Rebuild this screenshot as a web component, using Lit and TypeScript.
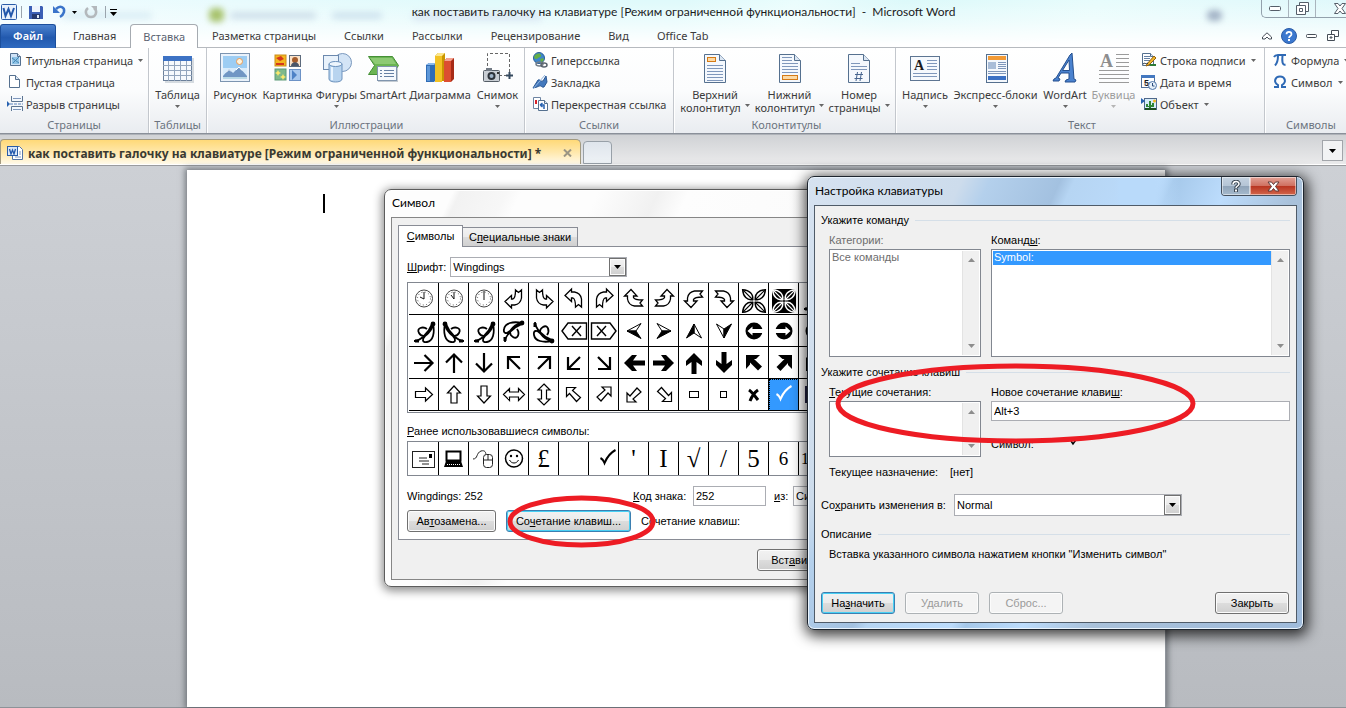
import { LitElement, html, svg, css, nothing } from "lit";
import { customElement } from "lit/decorators.js";

const RIBBON_FONT = css`"Noto Sans", "Open Sans", sans-serif`;
const TITLE_FONT = css`Lato, "Noto Sans", sans-serif`;
const DIALOG_FONT = css`"Liberation Sans", Arial, sans-serif`;

/* ---------- shared glyph helpers ---------- */

const triangle = html`<svg class="tri" width="5" height="3" viewBox="0 0 5 3" aria-hidden="true"><path d="M0 0h5L2.500 3z" fill="currentColor"/></svg>`;
const dropTriangle = html`<svg width="7" height="4" viewBox="0 0 7 4" aria-hidden="true"><path d="M0 0h7L3.500 4z" fill="#000"/></svg>`;

const icon = (size: number, body: unknown) =>
  html`<svg width=${size} height=${size} viewBox="0 0 ${size} ${size}" aria-hidden="true">${body}</svg>`;

const pageShape = (x: number, y: number, w: number, h: number, fold: number, fill = "#fff") => svg`
  <path d="M${x} ${y}h${w - fold}l${fold} ${fold}v${h - fold}h${-w}z" fill=${fill} stroke="#55708f"/>
  <path d="M${x + w - fold} ${y}v${fold}h${fold}" fill="#dbe6f3" stroke="#55708f"/>`;

const lines = (x: number, w: number, ys: number[], color = "#7f97bb") =>
  ys.map((y) => svg`<rect x=${x} y=${y} width=${w} height="1" fill=${color}/>`);

const bigIcons: Record<string, unknown> = {
  table: icon(32, svg`
    <rect x="3" y="6" width="29" height="25" fill="#9aa7b5" opacity=".4"/>
    <rect x="1.500" y="4.500" width="28" height="24" fill="#f6f9fd" stroke="#6b7f99"/>
    <rect x="1" y="4" width="29" height="5" fill="#3d72c4"/>
    <path d="M1 13.500h29M1 18.500h29M1 23.500h29M6.500 9v20M12.500 9v20M18.500 9v20M24.500 9v20" stroke="#93a5bd" fill="none"/>`),
  picture: icon(32, svg`
    <rect x="1.500" y="1.500" width="29" height="28" fill="#eaf2fb" stroke="#7c94b0"/>
    <rect x="4" y="4" width="24" height="23" fill="#9dcdf3"/>
    <rect x="4" y="16" width="24" height="11" fill="#d7ebfb"/>
    <circle cx="20.500" cy="9.500" r="3" fill="#fff4dc" stroke="#eb9a54"/>
    <path d="M4 24l6-7 4 4 6-6 8 9v1H4z" fill="#7096c4"/><path d="M7 20.500l3-3 2 2M17 18l3-3 3 3.500" stroke="#fff" fill="none"/>
    <path d="M4 25h24v2H4z" fill="#b9d9e6"/>`),
  clipart: icon(32, svg`
    <rect x="3" y="3" width="11" height="11" fill="#f4b71f" stroke="#c98c1a"/><path d="M4 6l5-2 3 3-4 2zM4 11h8v2H4z" fill="#d4381c"/>
    <rect x="17.500" y="3.500" width="11" height="11" fill="#fbe3c9" stroke="#5c6a7c"/><circle cx="23" cy="8" r="3" fill="#a55c2b"/><path d="M19 14c0-5 8-5 8 0z" fill="#4a5568"/>
    <rect x="3" y="17" width="11" height="11" fill="#7fb98b" stroke="#5d9a78"/><path d="M6 18l1 2 2 1-2 1-1 2-1-2-2-1 2-1zM11 22l1 2 2 1-2 1-1 2-1-2-2-1 2-1z" fill="#fbe86b"/>
    <rect x="17.500" y="17.500" width="11" height="11" fill="#a9c8ee" stroke="#6c92c6"/><path d="M20 18l5 5-5 5z" fill="#4f82c6"/>`),
  shapes: icon(32, svg`
    <circle cx="21.500" cy="10.500" r="9" fill="#d3e4f6" stroke="#7a98bd"/>
    <rect x="2.500" y="3.500" width="15" height="14" fill="#e9f2fb" stroke="#6c89ae"/>
    <path d="M8 12v15c0 4 13 4 13 0V12z" fill="#b8d4ef" stroke="#6c92bd"/>
    <ellipse cx="14.500" cy="12" rx="6.500" ry="2.500" fill="#eef6fd" stroke="#6c92bd"/>
    <path d="M11 15v13" stroke="#eaf5ff" stroke-width="2"/>`),
  smartart: icon(32, svg`
    <path d="M1.500 4.500h24l6 9-6 9h-24l6-9z" fill="#6bb453" stroke="#459036"/>
    <path d="M3 6h22l4 6H8z" fill="#9bd383" opacity=".7"/>
    <rect x="11" y="15" width="20" height="15" fill="#8c99a8" opacity=".5"/>
    <rect x="10.500" y="14.500" width="19" height="14" fill="#f5f9fd" stroke="#8095ae"/>
    ${lines(17, 10, [18, 21, 24], "#6580a4")}${lines(13, 2, [18, 21, 24], "#6580a4")}`),
  chart: icon(32, svg`
    <path d="M2 13l3-2h7v17l-2 2H2z" fill="#2f6cb5"/><path d="M2 13l3-2h7l-2 2z" fill="#8bb9ea"/><path d="M3 14h3v15H3z" fill="#5d97d8"/>
    <path d="M11 4l3-3h7v28h-10z" fill="#c99500"/><path d="M11 4h7v26h-7z" fill="#f2c224"/><path d="M11 4l3-3h7l-3 3z" fill="#fbe68c"/>
    <path d="M20 9l3-3h7v21l-3 3h-7z" fill="#a72b17"/><path d="M20 9h7v21h-7z" fill="#dc4d31"/><path d="M20 9l3-3h7l-3 3z" fill="#f4a391"/>`),
  screenshot: icon(32, svg`
    <path d="M5.500 14V1.500h22V21M17 23.500h8" fill="none" stroke="#666" stroke-dasharray="3 2"/>
    <path d="M27.500 20v7M24 23.500h7" stroke="#34495e" stroke-width="2"/>
    <rect x="1.500" y="18.500" width="16" height="11" rx="1" fill="#c9ced4" stroke="#555d66"/><path d="M4 16h6v3H4z" fill="#727a84"/>
    <circle cx="9.500" cy="24" r="4" fill="#2d333a"/><circle cx="9.500" cy="24" r="2" fill="#9fb4c8"/><rect x="15" y="20" width="2" height="2" fill="#333"/>`),
  header: icon(32, svg`${pageShape(5.5, 2.5, 21, 28, 6, "#f4f8fd")}<rect x="8.500" y="5.500" width="8" height="4" fill="#fcd9a4" stroke="#d57a15"/>${lines(8, 16, [13, 16, 19, 22, 25, 28])}`),
  footer: icon(32, svg`${pageShape(5.5, 2.5, 21, 28, 6, "#f4f8fd")}${lines(8, 10, [5, 8])}${lines(8, 16, [11, 14, 17, 20])}<rect x="8.500" y="23.500" width="15" height="4" fill="#fcd9a4" stroke="#d57a15"/>`),
  number: icon(32, svg`${pageShape(5.5, 2.5, 21, 28, 6, "#f4f8fd")}${lines(8, 9, [11])}${lines(8, 16, [14, 17])}<path d="M14.500 20l-1.500 9M18.500 20l-1.500 9M12 22.500h8M11.500 26.500h8" stroke="#47658f" fill="none"/>`),
  textbox: icon(32, svg`
    <rect x="1.500" y="4.500" width="29" height="24" fill="#f6f9fd" stroke="#5d7592"/>${lines(18, 10, [8, 11, 14, 17])}${lines(4, 24, [21, 24])}
    <text x="5" y="18" font-family="Liberation Serif, serif" font-weight="700" font-size="14" fill="#1c1c1c">A</text>`),
  blocks: icon(32, svg`
    <rect x="6.500" y="2.500" width="21" height="28" fill="#f4f8fd" stroke="#55708f"/><rect x="8" y="4" width="18" height="4" fill="#f29a35"/>
    <rect x="8" y="10" width="8" height="7" fill="#a9bdd8"/>${lines(18, 8, [10, 12, 14, 16])}${lines(8, 18, [19, 21])}<rect x="8" y="24" width="18" height="4" fill="#3a70c4"/>`),
  wordart: icon(32, svg`
    <path d="M22 1l2 26 2 1-1 2H15l1-2 3-1v-6h-8l-3 5 2 1-1 2H3l1-2 2-1L20 3z" transform="translate(1 0)" fill="#4a82cf" stroke="#244f8e"/>
    <path d="M13.500 18.500h7L20 8z" fill="#fff" stroke="#244f8e"/>`),
  dropcap: icon(32, svg`
    ${lines(18, 13, [2, 6, 10, 14], "#9b9b9b")}${lines(1, 30, [18, 22, 26, 30], "#9b9b9b")}
    <text x="2" y="15" font-family="Liberation Serif, serif" font-weight="700" font-size="18" fill="#8d8d8d">A</text>`),
};

const smallIcons: Record<string, unknown> = {
  cover: icon(16, svg`${pageShape(3.5, 1.5, 10, 12, 3, "#cfe3f7")}<rect x="5" y="5" width="7" height="7" fill="#8fc3e6"/><path d="M5 6l7 5M12 5l-6 6" stroke="#4587b5"/>`),
  blank: icon(16, svg`${pageShape(2.5, 1.5, 10, 12, 4)}`),
  breakPage: icon(16, svg`
    <path d="M4.500 0v5.500h11V0M4.500 15v-4.500h11V15" fill="#f4f8fd" stroke="#5d7592"/>${lines(6, 8, [2, 13])}<path d="M3 8h13" stroke="#5a83bd" stroke-dasharray="3 1"/><path d="M0 5l3 3-3 3z" fill="#2862b0"/>`),
  link: icon(16, svg`
    <circle cx="7" cy="6" r="5.500" fill="#3d86cc" stroke="#2a5f97"/><path d="M3 3c3-2 5-2 6 0s-2 2-3 3-3 2-4-1zM8 7l3-1 1 2-3 3z" fill="#64ae46"/>
    <ellipse cx="7.500" cy="12" rx="3.500" ry="2" fill="none" stroke="#737d88" stroke-width="1.500"/><ellipse cx="12" cy="13" rx="3" ry="2" fill="none" stroke="#59636e" stroke-width="1.500"/>`),
  bookmark: icon(16, svg`<path d="M1 14l5-8c2-1 3 2 5 1l3-5 1 6-3 5c-2 1-3-2-5-1l-2 1z" fill="#4278bd" stroke="#2b5893"/><path d="M1 15L13 1" stroke="#8fb3df"/>`),
  crossref: icon(16, svg`
    <path d="M1.500 1.500h7v11h-7z" fill="#fff" stroke="#6d84a2"/><rect x="3" y="4" width="2" height="4" fill="#d8232a"/>
    ${pageShape(6.5, 4.5, 9, 10, 3)}<path d="M12 13V9H8m0 0l2.500-2M8 9l2.500 2" stroke="#2862b0" stroke-width="1.500" fill="none"/>`),
  signature: icon(16, svg`
    ${pageShape(1.5, 1.5, 11, 12, 3)}${lines(3, 6, [4, 6, 8], "#6580a4")}<path d="M6 12l7-8 2 2-7 7-3 1z" fill="#f0b62e" stroke="#946311"/><path d="M9 13h6" stroke="#2d7b36" stroke-width="2"/><path d="M2 12c2-2 3 1 5-1" stroke="#1b2a3a" fill="none"/>`),
  date: icon(16, svg`
    <rect x=".5" y="1.500" width="13" height="12" fill="#fff" stroke="#53709a"/><rect x="0" y="1" width="14" height="3" fill="#4378c0"/>
    <text x="3" y="12" font-family="Liberation Sans, sans-serif" font-weight="700" font-size="9" fill="#15191f">5</text><circle cx="11.500" cy="11.500" r="4" fill="#e6f0fa" stroke="#5176a8"/><path d="M11.500 9v3h2" stroke="#284b7c" fill="none"/>`),
  object: icon(16, svg`
    <rect x="3.500" y="2.500" width="12" height="11" fill="#d6ecfa" stroke="#4e678a"/><path d="M5 8h2v2h1V5h2v4h1V7h2v4h-3v2H8v-2H5z" fill="#2e8535"/><circle cx="13.500" cy="5" r="1.500" fill="#f2b41d"/>
    <path d="M0 2l4 3-4 3z" fill="#2862b0"/><path d="M4 13h11" stroke="#1d4f22" stroke-width="2"/>`),
  pi: icon(16, svg`<path d="M2 5c1-2 2-2 4-2h8M6 3.500c0 4-1 8-3 10M10.500 3.500c-.5 5-.5 10 3 9" stroke="#2e69b5" stroke-width="2" fill="none"/>`),
  omega: icon(16, svg`<path d="M2 13h4v-2C1 8 3 2.500 8 2.500S15 8 10 11v2h4" stroke="#2e69b5" stroke-width="2" fill="none"/>`),
};

/* ---------- symbol table glyphs, drawn in a 30 x 31 cell ---------- */

const clock = (hands: string) => svg`
  <circle cx="15" cy="15.500" r="8.500" fill="#fff" stroke="#444"/>
  <circle cx="15" cy="15.500" r="6.500" fill="none" stroke="#555" stroke-dasharray="1 2.400"/>
  <path d=${hands} stroke="#111" fill="none"/>`;
const ribbonArrow = (matrix: string) => svg`
  <path transform="matrix(${matrix} 15 15.500)" d="M-9 3l6.500-6v3.500h1.500q2.500-1 2.500-9l3 2.500 3-2.500v8q-1 6-7 7h-3v3z" fill="#fff" stroke="#000" stroke-width="1.300"/>`;
const thin = (angle: number) => svg`
  <g transform="rotate(${angle} 15 16)"><path d="M5 16h18M15.500 8l8 8-8 8" stroke="#000" stroke-width="2.200" fill="none"/></g>`;
const thinDiagonal = (angle: number) => svg`
  <g transform="rotate(${angle} 15 16)"><path d="M9 10l12 12M21 10v12H9" stroke="#000" stroke-width="2.200" fill="none"/></g>`;
const bold = (angle: number) => svg`
  <path transform="rotate(${angle} 15 16)" d="M4 13.500h12l-4-5.500h5l8 8-8 8h-5l4-5.500H4z" fill="#000"/>`;
const boldDiagonal = (angle: number) => svg`
  <path transform="rotate(${angle} 15 16)" d="M7 8h14l-4 4h-2l8 7.500-4 4-8-8v2L7 22z" fill="#000"/>`;
const hollow = (angle: number) => svg`
  <path transform="rotate(${angle} 15 15.500)" d="M6.500 12.500h10v-3.500l7 6.500-7 6.500v-3.500h-10z" fill="#fff" stroke="#000" stroke-width="1.200"/>`;
const hollowDouble = (angle: number) => svg`
  <path transform="rotate(${angle} 15 15.500)" d="M4.500 15.500l6-6v3.500h9v-3.500l6 6-6 6v-3.500h-9v3.500z" fill="#fff" stroke="#000" stroke-width="1.200"/>`;
const hollowDiagonal = (angle: number) => svg`
  <path transform="rotate(${angle} 15 15.500)" d="M7.500 8.500h9l-3 3 8 7-4 4-7-8-3 3z" fill="#fff" stroke="#000" stroke-width="1.200"/>`;
const leaf = (matrix: string) => svg`
  <g transform="matrix(${matrix} 15 17)" fill="none" stroke="#000" stroke-width="1.800">
    <path d="M9-8C11 1 9 9 3 10C-2 11-2 7 1 4C5 1 8-2 8-6M3-3C-1-6-8-4-5 1S4 4 5-2M-10 9C-4 9 4 2 8-8"/><path d="M-9 9h4" stroke-width="3"/><circle cx="9" cy="-8" r="1.500" fill="#000"/>
  </g>`;
const eraser = (flip: number) => svg`
  <g transform="matrix(${flip} 0 0 1 ${flip < 0 ? 30 : 0} 0)" fill="none" stroke="#000" stroke-width="1.400"><path d="M3 16l6-8h18.500v16H9z"/><path d="M13 11l9 10M22 11l-9 10"/></g>`;
const head = (angle: number, flip: number) => svg`
  <g transform="rotate(${angle} 15 16) translate(15 16) scale(1 ${flip})"><path d="M7-7.500L-7 0H2z" fill="#fff" stroke="#000"/><path d="M7 7.500L-7 0H2z" fill="#000" stroke="#000"/></g>`;
const disc = (angle: number) => svg`
  <g transform="rotate(${angle} 15 16)"><circle cx="15" cy="16" r="8.500"/><path d="M8.500 16l5-4.500v2.500h11v4h-11v2.500z" fill="#fff"/></g>`;
const petals = (ink: string, paper: string) => svg`
  <g fill=${paper} stroke=${ink} stroke-width="1.500">
    ${[45, 135, 225, 315].map((a) => svg`<g transform="rotate(${a} 15 18)"><path d="M17 18c3-4.500 9-4.500 14 0-5 4.500-11 4.500-14 0z"/><path d="M16 18h14" stroke-width="1.200"/></g>`)}
  </g>`;

const glyphRows: unknown[][] = [
  [
    clock("M15 9v7l-4-2"), clock("M15 9v7l-3-4"), clock("M15 8v9"),
    ribbonArrow("1 0 0 1"), ribbonArrow("-1 0 0 1"), ribbonArrow("1 0 0 -1"), ribbonArrow("-1 0 0 -1"),
    ribbonArrow("0 1 -1 0"), ribbonArrow("0 1 1 0"), ribbonArrow("0 -1 -1 0"), ribbonArrow("0 -1 1 0"),
    petals("#000", "#fff"),
    svg`<rect x="3" y="6" width="24" height="24"/>${petals("#fff", "#000")}`,
    leaf("1 0 0 1"), nothing,
  ],
  [
    leaf("1 0 0 1"), leaf("-1 0 0 1"), leaf("1 0 0 1"), leaf("0 -1 -1 0"), leaf("0 1 -1 0"),
    eraser(1), eraser(-1), head(0, 1), head(180, -1), head(90, 1), head(270, 1),
    disc(0), disc(180), disc(90), nothing,
  ],
  [
    thin(0), thin(270), thin(90), thinDiagonal(180), thinDiagonal(270), thinDiagonal(90), thinDiagonal(0),
    bold(180), bold(0), bold(270), bold(90), boldDiagonal(0), boldDiagonal(90), boldDiagonal(270), nothing,
  ],
  [
    hollow(0), hollow(270), hollow(90), hollowDouble(0), hollowDouble(90),
    hollowDiagonal(0), hollowDiagonal(90), hollowDiagonal(270), hollowDiagonal(180),
    svg`<rect x="10.500" y="12.500" width="9" height="6" fill="#fff" stroke="#000"/>`,
    svg`<rect x="11.500" y="12.500" width="6" height="6" fill="#fff" stroke="#000"/>`,
    svg`<path d="M10 11c3 2 6 6 9 10M19 11c-3 2-6 6-8 11" stroke="#000" stroke-width="3" fill="none"/>`,
    svg`<path d="M7.500 15c2 1 3 2 4 5C14 14 17 10 22.500 7" stroke="#fff" stroke-width="2" fill="none"/>`,
    svg`<rect x="6" y="7" width="17" height="17" fill="#224"/>`, nothing,
  ],
];

const recentGlyphs: unknown[] = [
  svg`<rect x="3.500" y="8.500" width="22" height="16" fill="#fff" stroke="#222"/><path d="M10 15h8M10 18h10M13 21h7" stroke="#222"/><rect x="20" y="11" width="3" height="4"/>`,
  svg`<rect x="7.500" y="8.500" width="14" height="9" fill="#fff" stroke="#000" stroke-width="2"/><path d="M7 18h15l2 6H5z" fill="#000"/><path d="M8 21.500h14" stroke="#fff" stroke-dasharray="1 1"/>`,
  svg`<path d="M4 16c5 0 3-6 8-8 4-1 5 1 5 5" fill="none" stroke="#222"/><rect x="14.500" y="11.500" width="9" height="13" rx="3" fill="#fff" stroke="#222"/><path d="M14 17h10M19 12v5" stroke="#222"/>`,
  svg`<circle cx="15" cy="15.500" r="8.500" fill="#fff" stroke="#000" stroke-width="1.500"/><circle cx="12" cy="13" r="1.200"/><circle cx="18" cy="13" r="1.200"/><path d="M10.500 17c2 4 7 4 9 0" fill="none" stroke="#000"/>`,
  "£", "",
  svg`<path d="M11.500 15c2 1 3 2 4 5C18 14 21 10 26.500 7" stroke="#000" stroke-width="2" fill="none"/>`,
  "'", "I", "√", "/", "5", "6", "1", "",
];
const recentClass: Record<string, string> = { "6": "cell low", "1": "cell start" };

/* ---------- ribbon ---------- */

interface Big { icon: string; label: string; second?: string; arrow?: boolean; disabled?: boolean }
interface Small { icon: string; label: string; arrow?: boolean }
interface Group { name: string; cls: string; big?: Big[]; small?: Small[] }

const groups: Group[] = [
  { name: "Страницы", cls: "g-pages", small: [
    { icon: "cover", label: "Титульная страница", arrow: true }, { icon: "blank", label: "Пустая страница" }, { icon: "breakPage", label: "Разрыв страницы" }] },
  { name: "Таблицы", cls: "g-tables", big: [{ icon: "table", label: "Таблица", arrow: true }] },
  { name: "Иллюстрации", cls: "g-art", big: [
    { icon: "picture", label: "Рисунок" }, { icon: "clipart", label: "Картинка" }, { icon: "shapes", label: "Фигуры", arrow: true },
    { icon: "smartart", label: "SmartArt" }, { icon: "chart", label: "Диаграмма" }, { icon: "screenshot", label: "Снимок", arrow: true }] },
  { name: "Ссылки", cls: "g-links", small: [
    { icon: "link", label: "Гиперссылка" }, { icon: "bookmark", label: "Закладка" }, { icon: "crossref", label: "Перекрестная ссылка" }] },
  { name: "Колонтитулы", cls: "g-headers", big: [
    { icon: "header", label: "Верхний", second: "колонтитул", arrow: true }, { icon: "footer", label: "Нижний", second: "колонтитул", arrow: true },
    { icon: "number", label: "Номер", second: "страницы", arrow: true }] },
  { name: "Текст", cls: "g-text", big: [
    { icon: "textbox", label: "Надпись", arrow: true }, { icon: "blocks", label: "Экспресс-блоки", arrow: true },
    { icon: "wordart", label: "WordArt", arrow: true }, { icon: "dropcap", label: "Буквица", arrow: true, disabled: true }],
    small: [{ icon: "signature", label: "Строка подписи", arrow: true }, { icon: "date", label: "Дата и время" }, { icon: "object", label: "Объект", arrow: true }] },
  { name: "Символы", cls: "g-symbols", small: [{ icon: "pi", label: "Формула", arrow: true }, { icon: "omega", label: "Символ", arrow: true }] },
];

@customElement("word-ribbon")
class WordRibbon extends LitElement {
  static styles = css`
    :host { display: flex; height: 86px; overflow: hidden; color: #3b3b3b; border-bottom: 1px solid #8a9099;
      background: linear-gradient(#fff, #fbfcfd 50%, #e9ecf0); font: 11px/13px ${RIBBON_FONT}; }
    button { font: inherit; color: inherit; border: 0; padding: 0; background: none; white-space: nowrap; }
    svg { display: block; flex: none; overflow: visible; }
    .group { box-sizing: border-box; flex: none; display: flex; flex-direction: column; border-right: 1px solid #c3c7cd; box-shadow: 1px 0 #fff; }
    .body { flex: 1; display: flex; }
    .name { height: 16px; line-height: 15px; text-align: center; color: #6c7480; }
    .bigs { display: grid; }
    .big { display: flex; flex-direction: column; align-items: center; padding-top: 4px; }
    .big svg:first-child { margin-bottom: 4px; }
    .big:disabled { color: #9c9c9c; }
    .big .tri { margin-top: 4px; }
    .second { display: flex; align-items: center; gap: 4px; }
    .second .tri { margin-top: 0; }
    .tri { color: #666; }
    .big:disabled .tri { color: #b5b5b5; }
    .smalls { display: flex; flex-direction: column; align-items: flex-start; padding: 1px 0 0 7px; }
    .small { display: flex; align-items: center; gap: 3px; height: 22px; }
    .small .tri { margin-left: 2px; }
    .g-pages { width: 149px; }
    .g-tables { width: 58px; }
    .g-tables .bigs { grid-template-columns: 57px; }
    .g-art { width: 318px; padding-left: 2px; }
    .g-art .bigs { grid-template-columns: 52px 53px 45px 48px 66px 49px; }
    .g-links { width: 149px; }
    .g-headers { width: 222px; padding-left: 4px; }
    .g-headers .bigs { grid-template-columns: 74px 75px 64px; }
    .g-text { width: 369px; padding-left: 4px; }
    .g-text .bigs { grid-template-columns: 50px 91px 48px 49px; }
    .g-text .smalls { padding-left: 3px; }
    .g-symbols { width: 92px; border-right: 0; }
  `;

  private big(b: Big) {
    return html`<button class="big" ?disabled=${b.disabled}>
      ${bigIcons[b.icon]}<span>${b.label}</span>
      ${b.second ? html`<span class="second">${b.second}${triangle}</span>` : b.arrow ? triangle : nothing}
    </button>`;
  }

  render() {
    return groups.map((g) => html`<section class="group ${g.cls}" aria-label=${g.name}>
      <div class="body">
        ${g.big ? html`<div class="bigs">${g.big.map((b) => this.big(b))}</div>` : nothing}
        ${g.small ? html`<div class="smalls">${g.small.map((s) => html`<button class="small">${smallIcons[s.icon]}<span>${s.label}</span>${s.arrow ? triangle : nothing}</button>`)}</div>` : nothing}
      </div>
      <div class="name">${g.name}</div>
    </section>`);
  }
}

/* ---------- controls shared by both dialogs ---------- */

const dialogControls = css`
  :host { box-sizing: border-box; display: flex; flex-direction: column; color: #000; font: 11px/14px ${DIALOG_FONT}; }
  * { box-sizing: border-box; }
  svg { display: block; }
  u { text-underline-offset: 1px; }
  h2 { margin: 0; font: 12px/16px ${TITLE_FONT}; }
  label, .text { white-space: nowrap; }
  input, select, button { font: inherit; color: inherit; margin: 0; border-radius: 0; }
  input { min-width: 0; height: 20px; padding: 0 2px; border: 1px solid #abadb3; background: #fff; }
  .push { flex: none; height: 22px; padding: 0; border: 1px solid #707070; border-radius: 3px; white-space: nowrap;
    background: linear-gradient(#f2f2f2, #ebebeb 50%, #dddddd 50%, #cfcfcf); box-shadow: inset 0 0 0 1px #fcfcfc; }
  .push.default { border-color: #3c7fb1; box-shadow: inset 0 0 0 1px #48d0f4; }
  .push:disabled { color: #9a9a9a; border-color: #adb2b5; background: #f4f4f4; }
  .combo { display: flex; height: 20px; border: 1px solid #abadb3; background: #fff; }
  .combo select { flex: 1; min-width: 0; padding: 0 2px; border: 0; background: none; appearance: none; outline: 0; }
  .drop { flex: none; width: 17px; display: grid; place-items: center; border: 1px solid #707070; box-shadow: inset 0 0 0 1px #fcfcfc;
    background: linear-gradient(#f2f2f2, #ebebeb 50%, #dddddd 50%, #cfcfcf); }
`;

@customElement("symbol-dialog")
class SymbolDialog extends LitElement {
  static styles = [dialogControls, css`
    :host { border: 1px solid #5c5c5c; border-radius: 7px; padding: 0 6px 6px; box-shadow: 0 2px 10px 2px rgba(0, 0, 0, .45), inset 0 0 0 1px #fff;
      background: linear-gradient(115deg, #fdfdfd 9%, #f2f2f2 10%, #f7f7f7 16%, #fdfdfd 18%, #fdfdfd 28%, #f1f1f1 36%, #fdfdfd 40%, #f7f7f7); }
    h2 { height: 27px; padding: 5px 0 0 1px; }
    .client { flex: 1; display: flex; flex-direction: column; padding: 7px 6px; border: 1px solid #868686; background: #f0f0f0; }
    .tabs { display: flex; align-items: flex-end; height: 21px; }
    .tab { height: 19px; padding: 0; border: 1px solid #898c95; border-bottom: 0; background: linear-gradient(#f2f2f2, #ebebeb 50%, #dddddd 50%, #d0d0d0); }
    .tab.special { width: 115px; border-left: 0; }
    .tab.active { width: 65px; height: 22px; margin-bottom: -1px; padding-bottom: 1px; background: #fff; z-index: 1; }
    .panel { flex: none; display: flex; flex-direction: column; padding: 10px 8px 7px; border: 1px solid #898c95; background: #fff; }
    .row { display: flex; align-items: center; }
    .font { gap: 4px; }
    .font label { min-width: 39px; }
    .font .combo { width: 177px; }
    .cells { display: grid; grid-auto-rows: 32px; grid-template-columns: repeat(15, 30px); margin-top: 5px; padding: 0 1px 1px; border: 1px solid #828790; overflow: hidden; }
    .cell { display: grid; place-items: center; padding: 0; border: 0; border-right: 1px solid #000; border-bottom: 1px solid #000; background: #fff; font: 25px/31px "Liberation Serif", serif; overflow: hidden; }
    .cell.on { background: #3399ff; outline: 1px dotted #000; outline-offset: -1px; }
    .recent-label { margin-top: 11px; }
    .recent { margin-top: 3px; grid-auto-rows: 33px; padding-bottom: 0; }
    .recent .cell { border-bottom: 0; }
    .recent .cell.low { font-size: 19px; }
    .recent .cell.start { justify-items: start; padding-left: 2px; font-size: 16px; }
    .code { height: 20px; margin-top: 10px; }
    .code .text { width: 226px; }
    .code label { min-width: 57px; }
    .code input { width: 73px; margin-left: 3px; }
    .code .from { min-width: 15px; margin-left: 8px; }
    .code .combo { flex: 1; margin-left: 4px; }
    .actions { margin-top: 4px; }
    .auto { width: 89px; }
    .keys { width: 125px; margin: 0 10px; }
    .footer { display: flex; padding: 9px 0 0 359px; }
    .footer .push { width: 75px; }
  `];

  private glyph(g: unknown) {
    return typeof g === "string" ? g : html`<svg width="30" height="31" viewBox="0 0 30 31" aria-hidden="true">${g}</svg>`;
  }

  render() {
    return html`
      <h2>Символ</h2>
      <div class="client">
        <div class="tabs">
          <button class="tab active"><u>С</u>имволы</button><button class="tab special">С<u>п</u>ециальные знаки</button>
        </div>
        <div class="panel">
          <div class="row font">
            <label for="font"><u>Ш</u>рифт:</label>
            <div class="combo"><select id="font"><option>Wingdings</option></select><span class="drop">${dropTriangle}</span></div>
          </div>
          <div class="cells">
            ${glyphRows.map((row, r) => row.map((g, c) => html`<button class=${r === 3 && c === 12 ? "cell on" : "cell"}>${this.glyph(g)}</button>`))}
          </div>
          <div class="text recent-label"><u>Р</u>анее использовавшиеся символы:</div>
          <div class="cells recent">${recentGlyphs.map((g) => html`<button class=${(typeof g === "string" && recentClass[g]) || "cell"}>${this.glyph(g)}</button>`)}</div>
          <div class="row code">
            <span class="text">Wingdings: 252</span>
            <label for="code"><u>К</u>од знака:</label><input id="code" value="252">
            <label class="from" for="from"><u>и</u>з:</label>
            <div class="combo"><select id="from"><option>Символ (дес.)</option></select><span class="drop">${dropTriangle}</span></div>
          </div>
          <div class="row actions">
            <button class="push auto">Ав<u>т</u>озамена...</button>
            <button class="push default keys">Со<u>ч</u>етание клавиш...</button>
            <span class="text">Сочетание клавиш:</span>
          </div>
        </div>
        <div class="footer"><button class="push">Вст<u>а</u>вить</button></div>
      </div>`;
  }
}

const scrollGutter = html`<span class="gutter" aria-hidden="true">
  <svg width="7" height="4" viewBox="0 0 7 4"><path d="M0 4h7L3.500 0z" fill="#8d8d8d"/></svg>
  <svg width="7" height="4" viewBox="0 0 7 4"><path d="M0 0h7L3.500 4z" fill="#8d8d8d"/></svg>
</span>`;

@customElement("keyboard-dialog")
class KeyboardDialog extends LitElement {
  static styles = [dialogControls, css`
    :host { border: 1px solid #1e252e; border-radius: 7px; padding: 0 6px 6px; box-shadow: 1px 3px 14px 3px rgba(0, 0, 0, .75), inset 0 0 0 1px #eaf4fd;
      background: linear-gradient(90deg, rgba(255, 255, 255, 0) 62%, #b9dafa 63%, #b9dafa 70%, rgba(255, 255, 255, 0) 75%) 0 0 / 100% 28px no-repeat,
        linear-gradient(115deg, #d6e2f0 0, #cddcec 22%, #b4d0ec 26%, #a3c1e0 36%, #b6d5f3 38%, #bcdcfc 50%, #a5c8ea 52%, #bcdcfc 60%, #a9c1da 70%, #9fbbdb 100%); }
    .title { display: flex; justify-content: space-between; height: 28px; }
    h2 { padding: 6px 0 0 1px; }
    .caption { display: flex; height: 19px; border: 1px solid #44505e; border-top: 0; border-radius: 0 0 4px 4px; overflow: hidden; }
    .caption button { display: grid; place-items: center; padding: 0; border: 0; box-shadow: inset 0 0 0 1px rgba(255, 255, 255, .5); }
    .help { width: 28px; background: linear-gradient(#c4d2e0, #b4c4d5 50%, #8fa3b8 50%, #a5bacd); }
    .close { width: 46px; background: linear-gradient(#e2a297, #cf6f5f 50%, #b83420 50%, #d2664c); }
    .client { flex: 1; display: flex; flex-direction: column; padding: 7px 6px 8px; border: 1px solid #4f5b68; background: #f0f0f0; }
    .heading { display: flex; align-items: center; gap: 6px; height: 14px; white-space: nowrap; }
    .heading::after { content: ""; flex: 1; height: 1px; background: #d5dfe8; }
    .heading.keys { margin-top: 8px; }
    .heading.about { margin-top: 11px; }
    .fields { display: grid; grid-template-columns: 152px 1fr; column-gap: 10px; padding: 6px 0 0 8px; }
    .field { display: flex; flex-direction: column; gap: 2px; }
    .field label { height: 14px; }
    .list { display: flex; height: 108px; border: 1px solid #828790; padding: 1px; background: #fff; }
    .list.short { height: 56px; }
    .list select { flex: 1; min-width: 0; border: 0; padding: 0; background: none; overflow: hidden; outline: 0; }
    .list option { min-height: 14px; padding: 0 1px; color: #000; }
    .list select:disabled { opacity: 1; }
    .list select:disabled option { color: #6d6d6d; }
    .list option.on { background: #3399ff; color: #fff; }
    .gutter { flex: none; width: 17px; display: flex; flex-direction: column; justify-content: space-between; align-items: center; padding: 7px 0; background: #f0f0f0; border-left: 1px solid #e3e3e3; }
    .muted { color: #6d6d6d; }
    .preview { display: flex; gap: 36px; padding-top: 14px; }
    .current { display: flex; gap: 10px; padding: 8px 0 0 8px; }
    .current span:first-child { min-width: 111px; }
    .save { display: flex; align-items: center; gap: 8px; margin-top: 15px; }
    .save label { min-width: 124px; }
    .save .combo { width: 228px; height: 22px; }
    .about-text { padding: 6px 0 0 8px; }
    .buttons { display: flex; gap: 10px; margin-top: 31px; padding-right: 1px; }
    .buttons .push { width: 74px; }
    .buttons .end { margin-left: auto; }
  `];

  render() {
    return html`
      <div class="title">
        <h2>Настройка клавиатуры</h2>
        <div class="caption">
          <button class="help" aria-label="Справка"><svg width="10" height="12" viewBox="0 0 10 12"><path d="M2 4.500C2 .5 8 .5 8 4c0 2-3 2-3 4" fill="none" stroke="#3c4855" stroke-width="3.500"/><path d="M2 4.500C2 .5 8 .5 8 4c0 2-3 2-3 4" fill="none" stroke="#fff" stroke-width="1.500"/><rect x="3.500" y="9" width="3" height="3" fill="#fff" stroke="#3c4855"/></svg></button>
          <button class="close" aria-label="Закрыть"><svg width="13" height="11" viewBox="0 0 13 11"><path d="M1 1h3.500l2 2.500L8.500 1H12L8.500 5.500 12 10H8.500l-2-2.500L4.500 10H1l3.500-4.500z" fill="#fff" stroke="#5c3a3a"/></svg></button>
        </div>
      </div>
      <div class="client">
        <div class="heading">Укажите команду</div>
        <div class="fields">
          <div class="field">
            <label class="muted" for="cats">Категории:</label>
            <div class="list"><select id="cats" size="7" disabled><option>Все команды</option></select>${scrollGutter}</div>
          </div>
          <div class="field">
            <label for="cmds">Команд<u>ы</u>:</label>
            <div class="list"><select id="cmds" size="7"><option class="on">Symbol:</option></select>${scrollGutter}</div>
          </div>
        </div>
        <div class="heading keys">Укажите сочетание клавиш</div>
        <div class="fields">
          <div class="field">
            <label for="cur"><u>Т</u>екущие сочетания:</label>
            <div class="list short"><select id="cur" size="3"></select>${scrollGutter}</div>
          </div>
          <div class="field">
            <label for="new">Новое сочетание клави<u>ш</u>:</label>
            <input id="new" value="Alt+3">
            <div class="preview"><span>Символ:</span><svg width="9" height="10" viewBox="0 0 9 10"><path d="M1 4l2 3 5-7" fill="none" stroke="#000" stroke-width="1.500"/></svg></div>
          </div>
        </div>
        <div class="current"><span>Текущее назначение:</span><span>[нет]</span></div>
        <div class="save">
          <label for="save">Со<u>х</u>ранить изменения в:</label>
          <div class="combo"><select id="save"><option>Normal</option></select><span class="drop">${dropTriangle}</span></div>
        </div>
        <div class="heading about">Описание</div>
        <div class="text about-text">Вставка указанного символа нажатием кнопки "Изменить символ"</div>
        <div class="buttons">
          <button class="push default">На<u>з</u>начить</button>
          <button class="push" disabled>Удалить</button>
          <button class="push" disabled>Сброс...</button>
          <button class="push end">Закрыть</button>
        </div>
      </div>`;
  }
}

/* ---------- window ---------- */

const tabs = ["Главная", "Вставка", "Разметка страницы", "Ссылки", "Рассылки", "Рецензирование", "Вид", "Office Tab"];

@customElement("app-root")
class AppRoot extends LitElement {
  static styles = css`
    :host { display: block; }
    * { box-sizing: border-box; }
    button { font: inherit; color: inherit; border: 0; padding: 0; background: none; white-space: nowrap; }
    svg { display: block; flex: none; }
    .app { position: relative; display: flex; flex-direction: column; min-height: 100vh; overflow: hidden; font: 11px/15px ${RIBBON_FONT}; color: #3b3b3b;
      background: #c8cbd0; }
    .top { position: relative; border-bottom: 1px solid #b6babf;
      background: linear-gradient(rgba(255, 255, 255, 0), rgba(255, 255, 255, .4) 45%, #fff 95%), linear-gradient(120deg, #effcff, #e0fafb 35%, #dffafb 50%, #eafdfd 58%, #dcf9fa 66%, #e7fcfc 80%, #dff8fb); }
    .haze { position: absolute; border-radius: 5px; filter: blur(3px); }
    .haze.a { left: 209px; top: 8px; width: 15px; height: 14px; background: #a8c36e; }
    .haze.b { left: 230px; top: 12px; width: 86px; height: 7px; background: #cfe0ea; }
    .haze.c { left: 62px; top: 12px; width: 90px; height: 7px; background: #dbeef5; }
    .haze.d { left: 332px; top: 12px; width: 50px; height: 7px; background: #cfe3ee; }
    .haze.e { left: 1207px; top: 10px; width: 15px; height: 11px; background: #a3b3c6; }
    .haze.f { left: 412px; top: 12px; width: 130px; height: 9px; background: #dce9f4; }
    .titlebar { position: relative; display: flex; height: 24px; }
    .quick { display: flex; align-items: center; gap: 4px; padding-left: 1px; width: 120px; }
    .sep { width: 1px; height: 12px; background: #9aa4ad; }
    h1 { flex: 1; margin: 0; padding-right: 14px; text-align: center; font: 12px/24px ${TITLE_FONT}; color: #1c1c1c; white-space: pre; }
    .controls { display: flex; width: 85px; height: 18px; border: 1px solid #93a1ac; border-width: 0 0 1px 1px; border-radius: 0 0 0 5px; overflow: hidden; }
    .controls button { flex: none; width: 27px; height: 17px; display: grid; place-items: center; border-right: 1px solid #a9b4bd; }
    .controls .x { width: 47px; border: 0; }
    .tabs { position: relative; display: flex; height: 24px; margin-bottom: -1px; }
    .tabs > button { height: 24px; padding-bottom: 2px; }
    .file { width: 56px; border-radius: 3px 3px 0 0; background: linear-gradient(#4b82cf, #2259ae 55%, #2f6ac0); color: #fff; font-weight: 600; border: 1px solid #1c4f9c; border-bottom: 0; }
    .tab { padding: 0 13px; border: 1px solid transparent; border-bottom: 0; }
    .file + .tab { margin-left: 3px; }
    .tab.on { padding: 0 12px; color: #5a6270; background: #fff; border-color: #a6abb1; border-radius: 4px 4px 0 0; }
    .tools { margin-left: auto; display: flex; align-items: center; gap: 9px; padding-right: 6px; }
    .docs { display: flex; align-items: flex-end; height: 32px; padding-bottom: 1px; border-top: 1px solid #aeb2b8; border-bottom: 1px solid #9a9c9f;
      background: linear-gradient(#fff, #fff) 0 100% / 100% 1px no-repeat, linear-gradient(#d0d2d5, #ebebec); }
    .doc { display: flex; align-items: center; width: 581px; height: 25px; padding: 2px 8px 0 6px; border: 1px solid #a29a80; border-bottom: 0; border-radius: 4px 5px 0 0; background: linear-gradient(#ffd978, #ffe8ab 50%, #fffae9); font-size: 12px; font-weight: 700; color: #3a3a32; }
    .doc span { flex: 1; padding-left: 5px; white-space: nowrap; }
    .newdoc { width: 29px; height: 23px; margin-left: 2px; border: 1px solid #98a0a8; border-radius: 4px 4px 0 0; background: linear-gradient(#dfe5ec, #eef2f6); }
    .doclist { margin: 0 3px 3px auto; width: 21px; height: 21px; display: grid; place-items: center; border: 1px solid #a2a5aa; background: #f2f3f4; }
    .workspace { flex: 1; padding: 4px 0 0 6px; display: flex; justify-content: center; background: linear-gradient(#cdd0d5, #b8bbc0); border-bottom: 1px solid #8d9298; }
    .page { width: 979px; padding: 24px 136px; background: #fff; border-right: 1px solid #90959c; box-shadow: 0 0 6px 2px rgba(60, 65, 72, .6); }
    .caret { width: 2px; height: 19px; background: #000; }
    symbol-dialog { position: absolute; left: 384px; top: 189px; width: 580px; height: 398px; }
    keyboard-dialog { position: absolute; left: 807px; top: 176px; width: 497px; height: 454px; }
    .mark { position: absolute; overflow: visible; fill: none; stroke: #ed1c24; stroke-width: 5px; pointer-events: none; }
    .mark.one { left: 510px; top: 498px; }
    .mark.two { left: 838px; top: 366px; }
  `;

  render() {
    return html`<div class="app">
      <header class="top">
        <i class="haze a"></i><i class="haze b"></i><i class="haze c"></i><i class="haze d"></i><i class="haze e"></i><i class="haze f"></i>
        <div class="titlebar">
          <div class="quick">
            <svg width="16" height="16" viewBox="0 0 16 16"><rect x=".5" y=".5" width="15" height="15" rx="1" fill="#e8f1fb" stroke="#2a5ca8"/><path d="M2.500 4l2 8 3-7 2.500 7 3-8" fill="none" stroke="#2358ab" stroke-width="2"/></svg>
            <span class="sep"></span>
            <button aria-label="Сохранить"><svg width="22" height="16" viewBox="0 0 22 16"><path d="M3 2h13l1 1v12H3z" fill="#3b5fb5"/><path d="M6 2h8v6H6z" fill="#eef4fc"/><path d="M6 10h8v5H6z" fill="#24386f"/><path d="M11 11h2v3h-2z" fill="#dde8f5"/></svg></button>
            <button aria-label="Отменить"><svg width="16" height="16" viewBox="0 0 16 16"><path d="M4 5c4-4 9-2 8 3-1 3-2 4-4 5" fill="none" stroke="#3a74ca" stroke-width="2.500"/><path d="M1 2v7h7z" fill="#3a74ca"/></svg></button>
            <svg width="5" height="3" viewBox="0 0 5 3"><path d="M0 0h5L2.500 3z"/></svg>
            <button aria-label="Вернуть"><svg width="20" height="16" viewBox="0 0 20 16"><path d="M7 4c-4 3-2 9 3 9s7-6 3-9" fill="none" stroke="#b3b8bc" stroke-width="2.500"/><path d="M10 2h6v6z" fill="#b3b8bc"/></svg></button>
            <span class="sep"></span>
            <svg width="7" height="7" viewBox="0 0 7 7"><path d="M0 0h7v1H0zM0 3h7L3.500 7z"/></svg>
          </div>
          <h1>как поставить галочку на клавиатуре [Режим ограниченной функциональности]  -  Microsoft Word</h1>
          <div class="controls">
            <button aria-label="Свернуть"><svg width="12" height="6" viewBox="0 0 12 6"><rect x=".5" y=".5" width="11" height="4" rx="1" fill="#fff" stroke="#555e69"/></svg></button>
            <button aria-label="Развернуть"><svg width="13" height="13" viewBox="0 0 13 13" fill="#fff" stroke="#555e69"><path d="M3.500.5h9v9h-9z"/><path d="M.5 3.500h9v9h-9z"/><path d="M3.500 6.500h3v3h-3z"/></svg></button>
            <button class="x" aria-label="Закрыть"><svg width="12" height="11" viewBox="0 0 12 11"><path d="M.5.5h3.500l2 2.500L8 .5h3.500L8 5.500l3.500 5H8L6 8l-2 2.500H.5l3.500-5z" fill="#fff" stroke="#555e69"/></svg></button>
          </div>
        </div>
        <nav class="tabs">
          <button class="file">Файл</button>
          ${tabs.map((t) => html`<button class=${t === "Вставка" ? "tab on" : "tab"}>${t}</button>`)}
          <div class="tools">
            <svg width="10" height="8" viewBox="0 0 10 8"><path d="M.5 5L5 .8 9.500 5v2H7L5 5 3 7H.5z" fill="#fff" stroke="#454d57"/></svg>
            <svg width="16" height="16" viewBox="0 0 16 16"><circle cx="8" cy="8" r="7.500" fill="#3b78cf" stroke="#2a5ba6"/><path d="M5.500 6.300c0-3.300 5-3.300 5 0 0 1.700-2.500 1.700-2.500 3.700" fill="none" stroke="#fff" stroke-width="1.700"/><rect x="7" y="11" width="2" height="2" fill="#fff"/></svg>
            <svg width="12" height="5" viewBox="0 0 12 5"><rect x=".5" y=".5" width="10" height="3" rx="1" fill="#fff" stroke="#454d57"/></svg>
            <svg width="13" height="12" viewBox="0 0 13 12" fill="#fff" stroke="#454d57"><path d="M4.500.5h7v6h-7z"/><path d="M.5 4.500h7v6h-7z"/><path d="M3 7h2v1H3z"/></svg>
          </div>
        </nav>
      </header>
      <word-ribbon></word-ribbon>
      <div class="docs">
        <div class="doc">
          <svg width="16" height="16" viewBox="0 0 16 16"><path d="M5.500 1.500h7l3 3v10h-10z" fill="#fff" stroke="#5474a6"/><path d="M12 7h2M12 9h2M8 12h6" stroke="#7d97c0"/><rect x=".5" y="1.500" width="10" height="9" fill="#d9e7f8" stroke="#2a5ca8"/><path d="M2.500 4l1.500 5 1.500-4L7 9l1.500-5" fill="none" stroke="#2358ab" stroke-width="1.300"/></svg>
          <span>как поставить галочку на клавиатуре [Режим ограниченной функциональности] *</span>
          <button aria-label="Закрыть вкладку"><svg width="9" height="8" viewBox="0 0 9 8"><path d="M1 .5l7 7M8 .5l-7 7" stroke="#9b9583" stroke-width="2"/></svg></button>
        </div>
        <button class="newdoc" aria-label="Новый документ"></button>
        <button class="doclist" aria-label="Список документов">${dropTriangle}</button>
      </div>
      <main class="workspace"><div class="page"><div class="caret"></div></div></main>
      <symbol-dialog></symbol-dialog>
      <keyboard-dialog></keyboard-dialog>
      <svg class="mark one" width="143" height="47" viewBox="0 0 143 47"><ellipse cx="71.500" cy="23.500" rx="71.500" ry="23.500"/></svg>
      <svg class="mark two" width="355" height="75" viewBox="0 0 355 75"><ellipse cx="177.500" cy="37.500" rx="177.500" ry="37.500"/></svg>
    </div>`;
  }
}
